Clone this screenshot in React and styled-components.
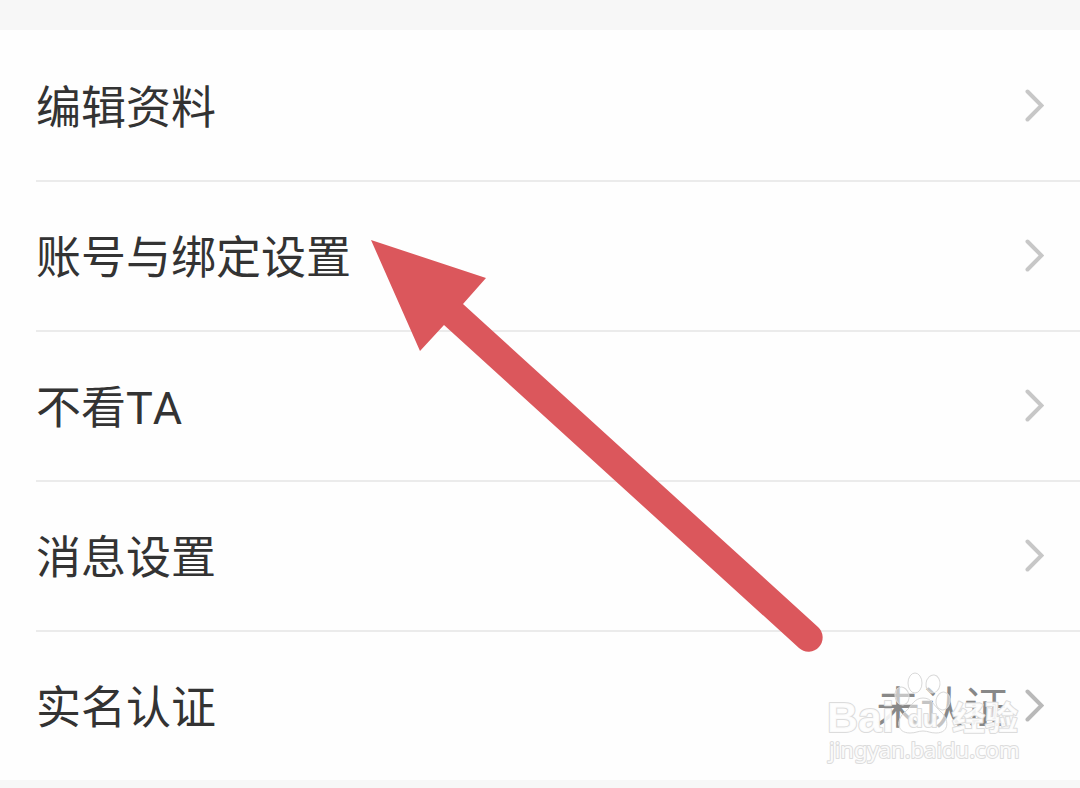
import React from "react";
import styled, { createGlobalStyle } from "styled-components";

const GlobalStyle = createGlobalStyle`
  body {
    margin: 0;
    background: #f7f7f7;
    font-family: Roboto, "Noto Sans CJK SC", sans-serif;
    font-kerning: none;
  }
`;

const Page = styled.main`
  position: relative;
  padding: 30px 0 8px;
  overflow: hidden;
`;

const List = styled.ul`
  margin: 0;
  padding: 0 0 0 36px;
  list-style: none;
  background: #fefefe;
`;

const Item = styled.li`
  & + & {
    box-shadow: inset 0 2px #ebebeb;
  }
`;

const Row = styled.button`
  display: flex;
  align-items: center;
  width: 100%;
  height: 150px;
  padding: 0 36px 0 0;
  border: 0;
  background: none;
  color: #333;
  font-family: inherit;
  font-size: 45px;
  font-kerning: inherit;
  line-height: 60px;
  text-align: left;
  cursor: pointer;
`;

const Label = styled.span`
  flex: 1;
  padding-top: 8px;
`;

const Value = styled.span`
  margin-right: 16px;
  padding-top: 8px;
  color: #888;
  font-size: 44px;
`;

const Chevron = styled.svg`
  width: 20px;
  height: 34px;
  fill: none;
  stroke: ${(props) => props.$color || "#c7c7c7"};
  stroke-width: 4;
  stroke-linecap: round;
`;

const Arrow = styled.svg`
  position: absolute;
  top: 240px;
  left: 371px;
  width: 452px;
  height: 412px;
  pointer-events: none;
`;

const Watermark = styled.div`
  position: absolute;
  right: 56px;
  bottom: 18px;
  width: 200px;
  pointer-events: none;
`;

const Logo = styled.svg`
  display: block;
  width: 200px;
  height: 98px;
  overflow: visible;
  fill: rgba(255, 255, 255, 0.5);
  stroke: #d9d9d9;
  stroke-width: 1;
  font-family: "Liberation Sans", "Noto Sans CJK SC", sans-serif;
  font-weight: bold;
`;

/* outline first, white face on top of it */
const Word = styled.text`
  fill: rgba(255, 255, 255, 0.9);
  stroke: #dcdcdc;
  stroke-width: 2;
  stroke-linejoin: round;
  paint-order: stroke;
`;

const items = [
  { label: "编辑资料" },
  { label: "账号与绑定设置" },
  { label: "不看TA" },
  { label: "消息设置" },
  { label: "实名认证", value: "未认证" },
];

export default function App() {
  return (
    <>
      <GlobalStyle />
      <Page>
        <List>
          {items.map((item) => (
            <Item key={item.label}>
              <Row type="button">
                <Label>{item.label}</Label>
                {item.value && <Value>{item.value}</Value>}
                <Chevron
                  viewBox="0 0 20 34"
                  $color={item.value && "#b9b9b9"}
                  aria-hidden="true"
                >
                  <path d="M3.5 3.5 17.5 17.5 3.5 31.5" />
                </Chevron>
              </Row>
            </Item>
          ))}
        </List>

        <Arrow viewBox="0 0 452 412" aria-hidden="true">
          <path
            fill="#db575c"
            d="M0 0 115 38 92 64 447 387A13.8 13.8 0 0 1 428 408L73 85 49 111Z"
          />
        </Arrow>

        <Watermark>
          <Logo viewBox="0 0 200 98">
            <Word x="3" y="60" fontSize="43">Bai</Word>
            <ellipse cx="91" cy="11" rx="7" ry="10" />
            <ellipse cx="109" cy="12" rx="7" ry="9" transform="rotate(8 109 12)" />
            <ellipse cx="78" cy="24" rx="7" ry="9" transform="rotate(-12 78 24)" />
            <ellipse cx="119" cy="29" rx="7" ry="9" transform="rotate(10 119 29)" />
            <path d="M99 26C90 26 88 34 81 40C72 47 72 61 86 61C92 61 94 59 99 59C104 59 106 61 112 61C126 61 125 47 117 40C109 33 108 26 99 26Z" />
            <Word x="84" y="55" fontSize="24">du</Word>
            <Word x="128" y="58" fontSize="33">经验</Word>
            <Word x="5" y="86" fontSize="22" fontWeight="normal" fontFamily="Noto Sans">
              jingyan.baidu.com
            </Word>
          </Logo>
        </Watermark>
      </Page>
    </>
  );
}
